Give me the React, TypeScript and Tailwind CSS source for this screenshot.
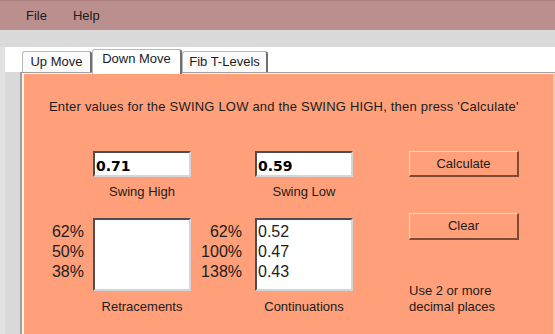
const sunken =
  "border-2 border-t-[#4e4e4e] border-l-[#4e4e4e] border-r-[#d6d6d6] border-b-[#d6d6d6] bg-white";
const raised =
  "border-t border-l border-t-[#fcd9c9] border-l-[#fcd9c9] border-r-2 border-b-2 border-r-[#7e4b38] border-b-[#7e4b38] bg-[#ffa07a] text-center";

const Tab = ({ label, width, active }: { label: string; width: number; active?: boolean }) => (
  <div
    style={{ width }}
    className={
      active
        ? "relative z-10 -mb-[2px] h-[25px] shrink-0 rounded-t-[3px] border border-b-0 border-[#b8b8b8] border-r-2 border-r-[#707070] bg-white pt-px text-center leading-4"
        : "h-[21px] shrink-0 rounded-t-[3px] border border-b-0 border-[#b8b8b8] border-r-2 border-r-[#707070] bg-[#fbfbfb] pt-[2px] text-center leading-4"
    }
  >
    {label}
  </div>
);

export default function App() {
  const pct = ["62%", "50%", "38%"];
  const cont = ["62%", "100%", "138%"];
  const contVals = ["0.52", "0.47", "0.43"];

  return (
    <div className="flex h-[334px] w-[555px] flex-col overflow-hidden bg-[#dadada] font-['Liberation_Sans',Arial,sans-serif] text-[13px] text-[#1c1c1c]">
      {/* menu bar */}
      <div className="flex h-[30px] shrink-0 items-center gap-[26px] border-t border-[#ad8080] bg-[#bc8f8f] pl-[26px] leading-4">
        <span>File</span>
        <span>Help</span>
      </div>
      <div className="h-[17px] shrink-0" />

      <div className="flex min-h-0 flex-1">
        <div className="w-[5px] shrink-0 bg-[#e3e3e3]" />
        <div className="flex min-w-0 flex-1 flex-col">
          {/* tab strip */}
          <div className="flex h-[25px] shrink-0 items-end bg-white pl-[17px]">
            <Tab label="Up Move" width={70} />
            <Tab label="Down Move" width={90} active />
            <Tab label="Fib T-Levels" width={86} />
          </div>

          <div className="flex min-h-0 flex-1">
            <div className="w-[15px] shrink-0" />
            <div className="flex min-w-0 flex-1 border-l-2 border-t border-[#a0a0a0]">
              <div className="flex min-w-0 flex-1 flex-col border-l-2 border-t border-r-2 border-l-[#fff3e4] border-t-[#fff3e4] border-r-[#f7c4ae] bg-[#ffa07a] pt-[25px]">
                <div className="whitespace-nowrap pl-[25px] leading-4 tracking-[0.2px]">
                  Enter values for the SWING LOW and the SWING HIGH, then press 'Calculate'
                </div>

                <div className="mt-[36px] grid grid-cols-[69px_98px_64px_98px_56px_110px]">
                  {/* row A */}
                  <div />
                  <div className={`${sunken} h-[26px] pl-px pt-[5px] font-['DejaVu_Sans',sans-serif] text-[14px] font-bold leading-4 text-black`}>
                    0.71
                  </div>
                  <div />
                  <div className={`${sunken} h-[26px] pl-px pt-[5px] font-['DejaVu_Sans',sans-serif] text-[14px] font-bold leading-4 text-black`}>
                    0.59
                  </div>
                  <div />
                  <div className={`${raised} h-[26px] pt-[4px] leading-4`}>Calculate</div>

                  {/* row B */}
                  <div />
                  <div className="pt-[7px] text-center leading-4">Swing High</div>
                  <div />
                  <div className="pt-[7px] text-center leading-4">Swing Low</div>
                  <div />
                  <div />

                  {/* row C */}
                  <div className="mt-[13px] pr-[9px] pt-[9px] text-right text-[16px] leading-5">
                    {pct.map((p) => (
                      <div key={p}>{p}</div>
                    ))}
                  </div>
                  <div className="mt-[13px] pt-[5px]">
                    <div className={`${sunken} h-[73px]`} />
                  </div>
                  <div className="mt-[13px] pr-[13px] pt-[9px] text-right text-[16px] leading-5">
                    {cont.map((p) => (
                      <div key={p}>{p}</div>
                    ))}
                  </div>
                  <div className="mt-[13px] pt-[5px]">
                    <div className={`${sunken} h-[73px] pl-px pt-[2px] text-[16px] leading-5`}>
                      {contVals.map((v) => (
                        <div key={v}>{v}</div>
                      ))}
                    </div>
                  </div>
                  <div />
                  <div className="row-span-2 mt-[13px]">
                    <div className={`${raised} h-[27px] pt-[4px] leading-4`}>Clear</div>
                    <div className="mt-[43px] leading-4">
                      Use 2 or more
                      <br />
                      decimal places
                    </div>
                  </div>

                  {/* row D */}
                  <div />
                  <div className="pt-[8px] text-center leading-4">Retracements</div>
                  <div />
                  <div className="pt-[8px] text-center leading-4">Continuations</div>
                  <div />
                </div>
              </div>
            </div>
          </div>
        </div>
      </div>
    </div>
  );
}
